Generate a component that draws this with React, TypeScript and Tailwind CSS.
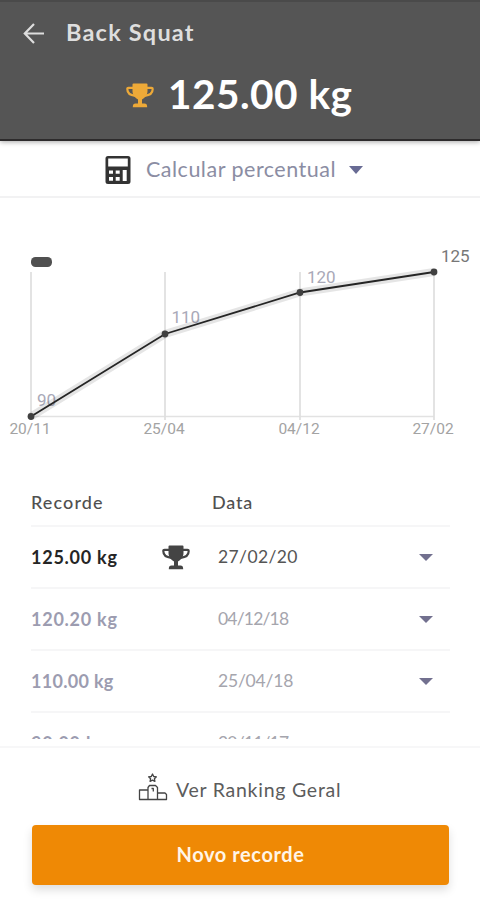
import clsx from "clsx";

type RecordItem = {
  weight: string;
  date: string;
  isBest?: boolean;
  weightClass: string;
  dateClass: string;
};

type ChartPoint = {
  x: number;
  y: number;
  label: string;
  date: string;
  labelX: number;
  labelY: number;
};

const records: RecordItem[] = [
  {
    weight: "125.00 kg",
    date: "27/02/20",
    isBest: true,
    weightClass: "tracking-[0.75px]",
    dateClass: "tracking-[0.4px]"
  },
  {
    weight: "120.20 kg",
    date: "04/12/18",
    weightClass: "tracking-[0.75px]",
    dateClass: "tracking-[-0.8px]"
  },
  {
    weight: "110.00 kg",
    date: "25/04/18",
    weightClass: "tracking-[0.3px]",
    dateClass: "tracking-[-0.2px]"
  },
  {
    weight: "90.00 kg",
    date: "20/11/17",
    weightClass: "tracking-[0.75px]",
    dateClass: "tracking-[-0.8px]"
  }
];

const points: ChartPoint[] = [
  { x: 31, y: 218.5, label: "90", date: "20/11", labelX: 37, labelY: 208 },
  { x: 165, y: 136, label: "110", date: "25/04", labelX: 171.5, labelY: 125 },
  { x: 300, y: 94.5, label: "120", date: "04/12", labelX: 307, labelY: 84.5 },
  { x: 434, y: 74, label: "125", date: "27/02", labelX: 441, labelY: 63.5 }
];

const linePoints = points.map(({ x, y }) => `${x},${y}`).join(" ");

const TrophyIcon = ({ className }: { className: string }) => (
  <svg viewBox="0 0 28 25" className={className}>
    <path
      d="M7.500 0.500h13q1 0 1 1v6.500c0 4-2.500 6.500-5.500 8.500v4h2.500c1.800 0 2.700 1 2.700 3.700H6.800c0-2.700.9-3.700 2.700-3.700H12v-4C9 14.500 6.500 12 6.500 8V1.500q0-1 1-1z"
      fill="currentColor"
    />
    <path
      d="M7 4.800H2.500q-1.200 0-1.200 1.200c0 3.400 2.600 6.300 8 6.800M21 4.800h4.500q1.200 0 1.200 1.200c0 3.400-2.600 6.300-8 6.800"
      fill="none"
      stroke="currentColor"
      strokeWidth="2.200"
    />
  </svg>
);

const CalculatorIcon = () => (
  <svg viewBox="0 0 26 28" className="h-7 w-[26px] text-[#333]">
    <path
      fillRule="evenodd"
      fill="currentColor"
      d="M3 0h20a2.500 2.500 0 0 1 2.500 2.500v23A2.500 2.500 0 0 1 23 28H3a2.500 2.500 0 0 1-2.500-2.500v-23A2.500 2.500 0 0 1 3 0zM3.200 2.500v8h19.600v-8zM4 14.500v3.300h4v-3.300zM10.700 14.500v3.300h4v-3.300zM17.700 14v11h4V14zM4 21v3.800h4V21zM10.700 21v3.800h4V21z"
    />
  </svg>
);

const PodiumIcon = () => (
  <svg
    viewBox="0 0 30 28"
    className="h-7 w-[30px] text-[#444]"
    fill="none"
    stroke="currentColor"
    strokeWidth="1.300"
    strokeLinejoin="round"
  >
    <path d="M14.500 1l1.200 2.500 2.700.3-2 1.900.5 2.700-2.400-1.300-2.400 1.300.5-2.700-2-1.900 2.700-.3z" />
    <path d="M1.500 17h8.500v9.500H1.500zM10 26.500v-12l1.500-2h6l2 2v12zM19.500 20H27l1.500 1.500v5h-9z" />
    <path d="M13.500 15.500h1.800v3" />
  </svg>
);

const Caret = ({ className }: { className: string }) => (
  <svg viewBox="0 0 14 8" preserveAspectRatio="none" className={className}>
    <path d="M0 0h14L7 8z" fill="currentColor" />
  </svg>
);

const Header = () => (
  <header className="relative z-10 h-[141px] border-t-2 border-b-2 border-t-[#4a4a4a] border-b-[#2d2b2c] bg-[#555] shadow-[0_1px_5px_rgba(0,0,0,0.35)]">
    <div className="flex h-[62px] items-center pl-[23px]">
      <svg
        viewBox="0 0 22 22"
        className="h-[22px] w-[22px] text-[#dedede]"
        fill="none"
        stroke="currentColor"
        strokeWidth="2.200"
      >
        <path d="M21 11.500H2M11 2L1.800 11.500l9.200 9.500" />
      </svg>
      <h1 className="ml-[21px] text-[23.5px] leading-none font-bold tracking-[1.2px] text-[#dedede]">
        Back Squat
      </h1>
    </div>
    <div className="flex h-[62px] items-center pl-[126px]">
      <TrophyIcon className="h-[25px] w-7 text-[#eda938]" />
      <p className="-mt-[2px] ml-[14px] text-[40.5px] leading-none font-bold tracking-[0.5px] whitespace-nowrap text-white">
        125.00 kg
      </p>
    </div>
  </header>
);

const Chart = () => (
  <svg
    viewBox="0 0 480 270"
    className="block h-[270px] w-[480px] shrink-0 font-[Roboto,sans-serif]"
  >
    <rect x="31" y="59" width="21" height="10" rx="4.500" fill="#505050" />
    <path d="M31 218.500H434" stroke="#e2e2e2" strokeWidth="1.500" />
    {points.map(({ x }) => (
      <path key={x} d={`M${x} 74V222`} stroke="#dedede" strokeWidth="1.700" />
    ))}
    {points.map(({ label, labelX, labelY }, index) => (
      <text
        key={label}
        x={labelX}
        y={labelY}
        fontSize="17"
        fill={index === points.length - 1 ? "#777" : "#a9a9b8"}
      >
        {label}
      </text>
    ))}
    <polyline
      points={linePoints}
      fill="none"
      stroke="#000"
      strokeOpacity="0.1"
      strokeWidth="8"
    />
    <polyline
      points={linePoints}
      fill="none"
      stroke="#252525"
      strokeWidth="1.800"
    />
    {points.map(({ x, y, date }) => (
      <g key={date}>
        <circle cx={x} cy={y} r="3.400" fill="#404040" />
        <text
          x={x - 1}
          y={236}
          fontSize="15.500"
          textAnchor="middle"
          fill="#a3a3a3"
        >
          {date}
        </text>
      </g>
    ))}
  </svg>
);

const RecordRow = ({ record }: { record: RecordItem }) => {
  const { weight, date, isBest, weightClass, dateClass } = record;

  return (
    <li className="flex h-[62px] shrink-0 items-center border-t-2 border-[#f6f6f7]">
      <span
        className={clsx(
          "w-[131px] text-[18px] font-bold whitespace-nowrap",
          weightClass,
          isBest ? "text-[#252525]" : "text-[#9c9cb0]"
        )}
      >
        {weight}
      </span>
      <span className="w-14">
        {isBest && <TrophyIcon className="h-[25px] w-7 text-[#444]" />}
      </span>
      <span
        className={clsx(
          "text-[17.5px] whitespace-nowrap",
          dateClass,
          isBest ? "text-[#555]" : "text-[#a5a5ad]"
        )}
      >
        {date}
      </span>
      <Caret className="mr-[17px] ml-auto h-[7px] w-[14px] text-[#72708f]" />
    </li>
  );
};

const App = () => {
  return (
    <div className="flex h-[900px] w-[480px] flex-col overflow-hidden bg-white font-[Lato,sans-serif]">
      <Header />

      <button className="flex h-[57px] shrink-0 items-center border-b-2 border-[#f2f2f3] pt-[2px] pl-[105px]">
        <CalculatorIcon />
        <span className="ml-[15px] w-[190px] text-left text-[21.5px] tracking-[0.5px] whitespace-nowrap text-[#8b8da3]">
          Calcular percentual
        </span>
        <Caret className="ml-[13px] h-2 w-[14px] text-[#686b94]" />
      </button>

      <Chart />

      <section className="flex h-[271px] shrink-0 flex-col overflow-hidden pr-[30px] pl-[31px]">
        <div className="flex h-[57px] shrink-0 items-center pt-[11px] text-[18px] font-medium text-[#505050]">
          <span className="w-[181px] tracking-[1.1px]">Recorde</span>
          <span className="tracking-[0.8px]">Data</span>
        </div>
        <ul className="flex flex-col">
          {records.map((record) => (
            <RecordRow key={record.date} record={record} />
          ))}
        </ul>
      </section>

      <footer className="mt-[7px] flex grow flex-col border-t-2 border-[#f7f7f8]">
        <button className="flex h-[77px] shrink-0 items-center pl-[138px]">
          <PodiumIcon />
          <span className="ml-2 pt-[6px] text-[19.5px] tracking-[0.75px] whitespace-nowrap text-[#5c5c5c]">
            Ver Ranking Geral
          </span>
        </button>
        <button className="mr-[31px] ml-8 h-[60px] shrink-0 rounded bg-[#ef8905] pb-[2px] text-[20px] font-bold tracking-[0.6px] text-[#fff5e8] shadow-[0_5px_10px_rgba(0,0,0,0.13)]">
          Novo recorde
        </button>
      </footer>
    </div>
  );
};

export default App;
